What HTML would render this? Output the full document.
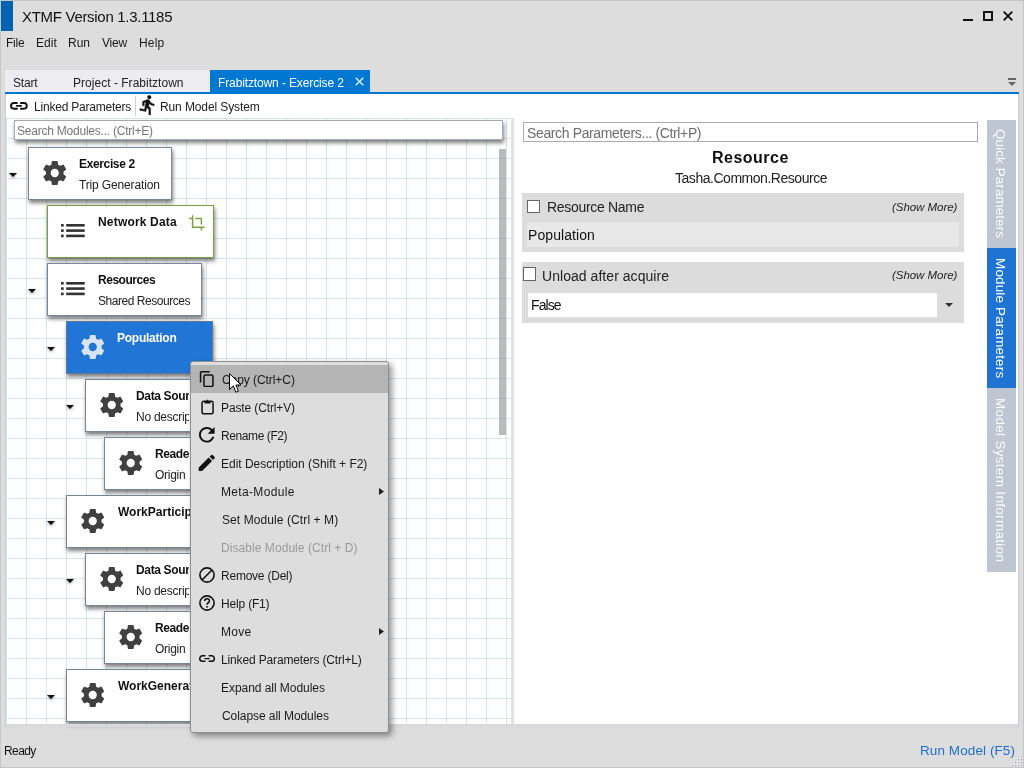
<!DOCTYPE html>
<html><head><meta charset="utf-8"><style>
html,body{margin:0;padding:0}
body{width:1024px;height:768px;overflow:hidden;position:relative;background:#dddddd;font-family:"Liberation Sans",sans-serif}
.t{position:absolute;white-space:pre;will-change:transform}
svg{display:block}
</style></head><body>
<div style="position:absolute;left:0px;top:0px;width:1024px;height:1px;background:#c6c6c6"></div>
<div style="position:absolute;left:0px;top:0px;width:1px;height:768px;background:#c6c6c6"></div>
<div style="position:absolute;left:1023px;top:0px;width:1px;height:768px;background:#c6c6c6"></div>
<div style="position:absolute;left:0px;top:767px;width:1024px;height:1px;background:#c6c6c6"></div>
<div style="position:absolute;left:1px;top:1px;width:12px;height:30px;background:#0063b1"></div>
<div class="t" style="left:21.62px;top:8px;font-size:15px;line-height:17px;color:#111;letter-spacing:-0.299px;">XTMF Version 1.3.1185</div>
<div style="position:absolute;left:963px;top:19px;width:10px;height:2px;background:#111"></div>
<div style="position:absolute;left:983px;top:11px;width:10px;height:10px;box-sizing:border-box;border:2px solid #111"></div>
<svg style="position:absolute;left:1003px;top:11px;" width="10" height="10" viewBox="0 0 10 10" preserveAspectRatio="none"><path d="M0.7 0.7L9.3 9.3M9.3 0.7L0.7 9.3" stroke="#111" stroke-width="1.9"/></svg>
<div class="t" style="left:6.44px;top:36px;font-size:12px;line-height:14px;color:#1a1a1a;letter-spacing:-0.207px;">File</div>
<div class="t" style="left:36.44px;top:36px;font-size:12px;line-height:14px;color:#1a1a1a;letter-spacing:0.027px;">Edit</div>
<div class="t" style="left:68.44px;top:36px;font-size:12px;line-height:14px;color:#1a1a1a;letter-spacing:-0.040px;">Run</div>
<div class="t" style="left:101.94px;top:36px;font-size:12px;line-height:14px;color:#1a1a1a;letter-spacing:-0.247px;">View</div>
<div class="t" style="left:138.74px;top:36px;font-size:12px;line-height:14px;color:#1a1a1a;letter-spacing:0.193px;">Help</div>
<div style="position:absolute;left:5px;top:70px;width:205px;height:22px;background:#ededf1"></div>
<div style="position:absolute;left:210px;top:70px;width:160px;height:22px;background:#0078d2"></div>
<div class="t" style="left:13.46px;top:76px;font-size:12px;line-height:14px;color:#222;letter-spacing:-0.180px;">Start</div>
<div class="t" style="left:73.04px;top:76px;font-size:12px;line-height:14px;color:#222;letter-spacing:0.025px;">Project - Frabitztown</div>
<div class="t" style="left:218.04px;top:76px;font-size:12px;line-height:14px;color:#fff;letter-spacing:-0.123px;">Frabitztown - Exercise 2</div>
<svg style="position:absolute;left:355px;top:77px;" width="9" height="9" viewBox="0 0 9 9" preserveAspectRatio="none"><path d="M0.7 0.7L8.3 8.3M8.3 0.7L0.7 8.3" stroke="#dde9f6" stroke-width="1.5"/></svg>
<div style="position:absolute;left:5px;top:92px;width:1014px;height:2px;background:#0078d2"></div>
<svg style="position:absolute;left:1008px;top:78px;" width="8" height="8" viewBox="0 0 8 8" preserveAspectRatio="none"><rect x="0" y="0" width="8" height="2" fill="#666"/><path d="M0 4H8L4 8Z" fill="#666"/></svg>
<div style="position:absolute;left:5px;top:94px;width:1px;height:634px;background:#cacadc"></div>
<div style="position:absolute;left:5px;top:727px;width:1014px;height:1px;background:#dadae2"></div>
<div style="position:absolute;left:6px;top:94px;width:1012px;height:24px;background:#fff"></div>
<div style="position:absolute;left:1018px;top:94px;width:1px;height:634px;background:#c8ccd8"></div>
<svg style="position:absolute;left:10px;top:102px;overflow:visible" width="18" height="8" viewBox="0 0 18 8" preserveAspectRatio="none"><path d="M6.95 0.95H3.9A2.9 2.9 0 0 0 3.9 6.75H6.95M10.85 0.95H13.9A2.9 2.9 0 0 1 13.9 6.75H10.85" stroke="#111" stroke-width="1.9" stroke-linecap="round" fill="none"/><path d="M6.6 3.9H11.2" stroke="#111" stroke-width="1.6" stroke-linecap="round"/></svg>
<div class="t" style="left:33.74px;top:100px;font-size:12px;line-height:14px;color:#222;letter-spacing:-0.210px;">Linked Parameters</div>
<div style="position:absolute;left:135px;top:96px;width:1px;height:20px;background:#d0d0d0"></div>
<svg style="position:absolute;left:137.1px;top:94.3px;" width="21.8" height="21.8" viewBox="0 0 24 24" preserveAspectRatio="none"><path stroke="#111" stroke-width="0.35" d="M13.5,5.5C14.59,5.5 15.5,4.58 15.5,3.5C15.5,2.38 14.59,1.5 13.5,1.5C12.39,1.5 11.5,2.38 11.5,3.5C11.5,4.58 12.39,5.5 13.5,5.5M9.89,19.38L10.89,15L13,17V23H15V15.5L12.89,13.5L13.5,10.5C14.79,12 16.79,13 19,13V11C17.09,11 15.5,10 14.69,8.58L13.69,7C13.29,6.38 12.69,6 12,6C11.69,6 11.5,6.08 11.19,6.08L6,8.28V13H8V9.58L9.79,8.88L8.19,17L3.29,16L2.89,18L9.89,19.38Z" fill="#111"/></svg>
<div class="t" style="left:160.04px;top:100px;font-size:12px;line-height:14px;color:#222;letter-spacing:-0.111px;">Run Model System</div>
<div style="position:absolute;left:6px;top:118px;width:505px;height:606px;background-color:#fff;background-image:linear-gradient(to right,#d5e6ee 1px,transparent 1px),linear-gradient(to bottom,#d5e6ee 1px,transparent 1px);background-size:20px 20px"></div>
<div style="position:absolute;left:511px;top:118px;width:3px;height:606px;background:#e2e2e2"></div>
<div style="position:absolute;left:514px;top:118px;width:504px;height:606px;background:#fff"></div>
<div style="position:absolute;left:14px;top:120px;width:489px;height:20px;box-sizing:border-box;background:#fff;border:1px solid #a4a8b0;box-shadow:0.5px 2.5px 4px rgba(0,0,0,0.5)"></div>
<div class="t" style="left:17.46px;top:124px;font-size:12px;line-height:14px;color:#777;letter-spacing:-0.224px;">Search Modules... (Ctrl+E)</div>
<svg style="position:absolute;left:9px;top:173px;overflow:visible;filter:drop-shadow(0 1.5px 1.5px rgba(0,0,0,0.4))" width="8" height="4" viewBox="0 0 8 4" preserveAspectRatio="none"><path d="M0 0H8L4 4Z" fill="#111"/></svg>
<div style="position:absolute;left:28px;top:147px;width:144px;height:53px;box-sizing:border-box;background:#fff;border:1px solid #74869a;box-shadow:0.5px 2.5px 4px rgba(0,0,0,0.5)"></div>
<svg style="position:absolute;left:42.5px;top:161px;width:23.5px" width="24" height="24" viewBox="2 2 20 20" preserveAspectRatio="none"><path d="M12,15.5A3.5,3.5 0 0,1 8.5,12A3.5,3.5 0 0,1 12,8.5A3.5,3.5 0 0,1 15.5,12A3.5,3.5 0 0,1 12,15.5M19.43,12.97C19.47,12.65 19.5,12.33 19.5,12C19.5,11.67 19.47,11.34 19.43,11L21.54,9.37C21.73,9.22 21.78,8.95 21.66,8.73L19.66,5.27C19.54,5.05 19.27,4.96 19.05,5.05L16.56,6.05C16.04,5.66 15.5,5.32 14.87,5.07L14.5,2.42C14.46,2.18 14.25,2 14,2H10C9.75,2 9.54,2.18 9.5,2.42L9.13,5.07C8.5,5.32 7.96,5.66 7.44,6.05L4.95,5.05C4.73,4.96 4.46,5.05 4.34,5.27L2.34,8.73C2.21,8.95 2.27,9.22 2.46,9.37L4.57,11C4.53,11.34 4.5,11.67 4.5,12C4.5,12.33 4.53,12.65 4.57,12.97L2.46,14.63C2.27,14.78 2.21,15.05 2.34,15.27L4.34,18.73C4.46,18.95 4.73,19.03 4.95,18.95L7.44,17.94C7.96,18.34 8.5,18.68 9.13,18.93L9.5,21.58C9.54,21.82 9.75,22 10,22H14C14.25,22 14.46,21.82 14.5,21.58L14.87,18.93C15.5,18.67 16.04,18.34 16.56,17.94L19.05,18.95C19.27,19.03 19.54,18.95 19.66,18.73L21.66,15.27C21.78,15.05 21.73,14.78 21.54,14.63L19.43,12.97Z" fill="#404040"/></svg>
<div class="t" style="left:78.72px;top:157px;font-size:12px;line-height:14px;color:#111;font-weight:700;letter-spacing:-0.360px;">Exercise 2</div>
<div class="t" style="left:79.26px;top:178px;font-size:12px;line-height:14px;color:#222;letter-spacing:-0.143px;">Trip Generation</div>
<div style="position:absolute;left:47px;top:205px;width:167px;height:53px;box-sizing:border-box;background:#fff;border:1px solid #76a03c;box-shadow:0.5px 2.5px 4px rgba(0,0,0,0.5)"></div>
<svg style="position:absolute;left:61px;top:224px;" width="24" height="14" viewBox="0 0 24 14" preserveAspectRatio="none"><rect x="0" y="0" width="2.7" height="2.6" fill="#333"/><rect x="5.2" y="0" width="18.5" height="2.6" fill="#333"/><rect x="0" y="5.3" width="2.7" height="2.6" fill="#333"/><rect x="5.2" y="5.3" width="18.5" height="2.6" fill="#333"/><rect x="0" y="10.6" width="2.7" height="2.6" fill="#333"/><rect x="5.2" y="10.6" width="18.5" height="2.6" fill="#333"/></svg>
<div class="t" style="left:97.72px;top:215px;font-size:12px;line-height:14px;color:#111;font-weight:700;letter-spacing:0.180px;">Network Data</div>
<svg style="position:absolute;left:189px;top:215px;" width="16" height="16" viewBox="0 0 16 16" preserveAspectRatio="none"><path d="M0 3.5H3.6M3.6 0.2V12.3H15.6M6.2 3.5H11.9Q12.4 3.5 12.4 4V9.6M12.4 12.3V15.6" stroke="#7aa23a" stroke-width="1.5" fill="none"/></svg>
<svg style="position:absolute;left:28px;top:289px;overflow:visible;filter:drop-shadow(0 1.5px 1.5px rgba(0,0,0,0.4))" width="8" height="4" viewBox="0 0 8 4" preserveAspectRatio="none"><path d="M0 0H8L4 4Z" fill="#111"/></svg>
<div style="position:absolute;left:47px;top:263px;width:155px;height:53px;box-sizing:border-box;background:#fff;border:1px solid #74869a;box-shadow:0.5px 2.5px 4px rgba(0,0,0,0.5)"></div>
<svg style="position:absolute;left:61px;top:282px;" width="24" height="14" viewBox="0 0 24 14" preserveAspectRatio="none"><rect x="0" y="0" width="2.7" height="2.6" fill="#333"/><rect x="5.2" y="0" width="18.5" height="2.6" fill="#333"/><rect x="0" y="5.3" width="2.7" height="2.6" fill="#333"/><rect x="5.2" y="5.3" width="18.5" height="2.6" fill="#333"/><rect x="0" y="10.6" width="2.7" height="2.6" fill="#333"/><rect x="5.2" y="10.6" width="18.5" height="2.6" fill="#333"/></svg>
<div class="t" style="left:97.72px;top:273px;font-size:12px;line-height:14px;color:#111;font-weight:700;letter-spacing:-0.465px;">Resources</div>
<div class="t" style="left:97.96px;top:294px;font-size:12px;line-height:14px;color:#222;letter-spacing:-0.464px;">Shared Resources</div>
<svg style="position:absolute;left:47px;top:347px;overflow:visible;filter:drop-shadow(0 1.5px 1.5px rgba(0,0,0,0.4))" width="8" height="4" viewBox="0 0 8 4" preserveAspectRatio="none"><path d="M0 0H8L4 4Z" fill="#111"/></svg>
<div style="position:absolute;left:66px;top:321px;width:147px;height:53px;box-sizing:border-box;background:#2175d5;border:1px solid #66788e;box-shadow:0.5px 2.5px 4px rgba(0,0,0,0.5)"></div>
<svg style="position:absolute;left:80.5px;top:335px;width:23.5px" width="24" height="24" viewBox="2 2 20 20" preserveAspectRatio="none"><path d="M12,15.5A3.5,3.5 0 0,1 8.5,12A3.5,3.5 0 0,1 12,8.5A3.5,3.5 0 0,1 15.5,12A3.5,3.5 0 0,1 12,15.5M19.43,12.97C19.47,12.65 19.5,12.33 19.5,12C19.5,11.67 19.47,11.34 19.43,11L21.54,9.37C21.73,9.22 21.78,8.95 21.66,8.73L19.66,5.27C19.54,5.05 19.27,4.96 19.05,5.05L16.56,6.05C16.04,5.66 15.5,5.32 14.87,5.07L14.5,2.42C14.46,2.18 14.25,2 14,2H10C9.75,2 9.54,2.18 9.5,2.42L9.13,5.07C8.5,5.32 7.96,5.66 7.44,6.05L4.95,5.05C4.73,4.96 4.46,5.05 4.34,5.27L2.34,8.73C2.21,8.95 2.27,9.22 2.46,9.37L4.57,11C4.53,11.34 4.5,11.67 4.5,12C4.5,12.33 4.53,12.65 4.57,12.97L2.46,14.63C2.27,14.78 2.21,15.05 2.34,15.27L4.34,18.73C4.46,18.95 4.73,19.03 4.95,18.95L7.44,17.94C7.96,18.34 8.5,18.68 9.13,18.93L9.5,21.58C9.54,21.82 9.75,22 10,22H14C14.25,22 14.46,21.82 14.5,21.58L14.87,18.93C15.5,18.67 16.04,18.34 16.56,17.94L19.05,18.95C19.27,19.03 19.54,18.95 19.66,18.73L21.66,15.27C21.78,15.05 21.73,14.78 21.54,14.63L19.43,12.97Z" fill="#d6e4f6"/></svg>
<div class="t" style="left:116.72px;top:331px;font-size:12px;line-height:14px;color:#fff;font-weight:700;letter-spacing:-0.253px;">Population</div>
<svg style="position:absolute;left:66px;top:405px;overflow:visible;filter:drop-shadow(0 1.5px 1.5px rgba(0,0,0,0.4))" width="8" height="4" viewBox="0 0 8 4" preserveAspectRatio="none"><path d="M0 0H8L4 4Z" fill="#111"/></svg>
<div style="position:absolute;left:85px;top:379px;width:150px;height:53px;box-sizing:border-box;background:#fff;border:1px solid #74869a;box-shadow:0.5px 2.5px 4px rgba(0,0,0,0.5)"></div>
<svg style="position:absolute;left:99.5px;top:393px;width:23.5px" width="24" height="24" viewBox="2 2 20 20" preserveAspectRatio="none"><path d="M12,15.5A3.5,3.5 0 0,1 8.5,12A3.5,3.5 0 0,1 12,8.5A3.5,3.5 0 0,1 15.5,12A3.5,3.5 0 0,1 12,15.5M19.43,12.97C19.47,12.65 19.5,12.33 19.5,12C19.5,11.67 19.47,11.34 19.43,11L21.54,9.37C21.73,9.22 21.78,8.95 21.66,8.73L19.66,5.27C19.54,5.05 19.27,4.96 19.05,5.05L16.56,6.05C16.04,5.66 15.5,5.32 14.87,5.07L14.5,2.42C14.46,2.18 14.25,2 14,2H10C9.75,2 9.54,2.18 9.5,2.42L9.13,5.07C8.5,5.32 7.96,5.66 7.44,6.05L4.95,5.05C4.73,4.96 4.46,5.05 4.34,5.27L2.34,8.73C2.21,8.95 2.27,9.22 2.46,9.37L4.57,11C4.53,11.34 4.5,11.67 4.5,12C4.5,12.33 4.53,12.65 4.57,12.97L2.46,14.63C2.27,14.78 2.21,15.05 2.34,15.27L4.34,18.73C4.46,18.95 4.73,19.03 4.95,18.95L7.44,17.94C7.96,18.34 8.5,18.68 9.13,18.93L9.5,21.58C9.54,21.82 9.75,22 10,22H14C14.25,22 14.46,21.82 14.5,21.58L14.87,18.93C15.5,18.67 16.04,18.34 16.56,17.94L19.05,18.95C19.27,19.03 19.54,18.95 19.66,18.73L21.66,15.27C21.78,15.05 21.73,14.78 21.54,14.63L19.43,12.97Z" fill="#404040"/></svg>
<div class="t" style="left:135.72px;top:389px;font-size:12px;line-height:14px;color:#111;font-weight:700;letter-spacing:-0.344px;width:53.28px;overflow:hidden;">Data Source</div>
<div class="t" style="left:135.54px;top:410px;font-size:12px;line-height:14px;color:#222;letter-spacing:-0.259px;width:53.46px;overflow:hidden;">No description</div>
<div style="position:absolute;left:104px;top:437px;width:150px;height:53px;box-sizing:border-box;background:#fff;border:1px solid #74869a;box-shadow:0.5px 2.5px 4px rgba(0,0,0,0.5)"></div>
<svg style="position:absolute;left:118.5px;top:451px;width:23.5px" width="24" height="24" viewBox="2 2 20 20" preserveAspectRatio="none"><path d="M12,15.5A3.5,3.5 0 0,1 8.5,12A3.5,3.5 0 0,1 12,8.5A3.5,3.5 0 0,1 15.5,12A3.5,3.5 0 0,1 12,15.5M19.43,12.97C19.47,12.65 19.5,12.33 19.5,12C19.5,11.67 19.47,11.34 19.43,11L21.54,9.37C21.73,9.22 21.78,8.95 21.66,8.73L19.66,5.27C19.54,5.05 19.27,4.96 19.05,5.05L16.56,6.05C16.04,5.66 15.5,5.32 14.87,5.07L14.5,2.42C14.46,2.18 14.25,2 14,2H10C9.75,2 9.54,2.18 9.5,2.42L9.13,5.07C8.5,5.32 7.96,5.66 7.44,6.05L4.95,5.05C4.73,4.96 4.46,5.05 4.34,5.27L2.34,8.73C2.21,8.95 2.27,9.22 2.46,9.37L4.57,11C4.53,11.34 4.5,11.67 4.5,12C4.5,12.33 4.53,12.65 4.57,12.97L2.46,14.63C2.27,14.78 2.21,15.05 2.34,15.27L4.34,18.73C4.46,18.95 4.73,19.03 4.95,18.95L7.44,17.94C7.96,18.34 8.5,18.68 9.13,18.93L9.5,21.58C9.54,21.82 9.75,22 10,22H14C14.25,22 14.46,21.82 14.5,21.58L14.87,18.93C15.5,18.67 16.04,18.34 16.56,17.94L19.05,18.95C19.27,19.03 19.54,18.95 19.66,18.73L21.66,15.27C21.78,15.05 21.73,14.78 21.54,14.63L19.43,12.97Z" fill="#404040"/></svg>
<div class="t" style="left:154.72px;top:447px;font-size:12px;line-height:14px;color:#111;font-weight:700;letter-spacing:-0.397px;width:34.28px;overflow:hidden;">Reader</div>
<div class="t" style="left:154.96px;top:468px;font-size:12px;line-height:14px;color:#222;letter-spacing:-0.276px;width:34.04px;overflow:hidden;">Origin</div>
<svg style="position:absolute;left:47px;top:521px;overflow:visible;filter:drop-shadow(0 1.5px 1.5px rgba(0,0,0,0.4))" width="8" height="4" viewBox="0 0 8 4" preserveAspectRatio="none"><path d="M0 0H8L4 4Z" fill="#111"/></svg>
<div style="position:absolute;left:66px;top:495px;width:170px;height:53px;box-sizing:border-box;background:#fff;border:1px solid #74869a;box-shadow:0.5px 2.5px 4px rgba(0,0,0,0.5)"></div>
<svg style="position:absolute;left:80.5px;top:509px;width:23.5px" width="24" height="24" viewBox="2 2 20 20" preserveAspectRatio="none"><path d="M12,15.5A3.5,3.5 0 0,1 8.5,12A3.5,3.5 0 0,1 12,8.5A3.5,3.5 0 0,1 15.5,12A3.5,3.5 0 0,1 12,15.5M19.43,12.97C19.47,12.65 19.5,12.33 19.5,12C19.5,11.67 19.47,11.34 19.43,11L21.54,9.37C21.73,9.22 21.78,8.95 21.66,8.73L19.66,5.27C19.54,5.05 19.27,4.96 19.05,5.05L16.56,6.05C16.04,5.66 15.5,5.32 14.87,5.07L14.5,2.42C14.46,2.18 14.25,2 14,2H10C9.75,2 9.54,2.18 9.5,2.42L9.13,5.07C8.5,5.32 7.96,5.66 7.44,6.05L4.95,5.05C4.73,4.96 4.46,5.05 4.34,5.27L2.34,8.73C2.21,8.95 2.27,9.22 2.46,9.37L4.57,11C4.53,11.34 4.5,11.67 4.5,12C4.5,12.33 4.53,12.65 4.57,12.97L2.46,14.63C2.27,14.78 2.21,15.05 2.34,15.27L4.34,18.73C4.46,18.95 4.73,19.03 4.95,18.95L7.44,17.94C7.96,18.34 8.5,18.68 9.13,18.93L9.5,21.58C9.54,21.82 9.75,22 10,22H14C14.25,22 14.46,21.82 14.5,21.58L14.87,18.93C15.5,18.67 16.04,18.34 16.56,17.94L19.05,18.95C19.27,19.03 19.54,18.95 19.66,18.73L21.66,15.27C21.78,15.05 21.73,14.78 21.54,14.63L19.43,12.97Z" fill="#404040"/></svg>
<div class="t" style="left:117.50px;top:505px;font-size:12px;line-height:14px;color:#111;font-weight:700;width:71.50px;overflow:hidden;">WorkParticipation</div>
<svg style="position:absolute;left:66px;top:579px;overflow:visible;filter:drop-shadow(0 1.5px 1.5px rgba(0,0,0,0.4))" width="8" height="4" viewBox="0 0 8 4" preserveAspectRatio="none"><path d="M0 0H8L4 4Z" fill="#111"/></svg>
<div style="position:absolute;left:85px;top:553px;width:150px;height:53px;box-sizing:border-box;background:#fff;border:1px solid #74869a;box-shadow:0.5px 2.5px 4px rgba(0,0,0,0.5)"></div>
<svg style="position:absolute;left:99.5px;top:567px;width:23.5px" width="24" height="24" viewBox="2 2 20 20" preserveAspectRatio="none"><path d="M12,15.5A3.5,3.5 0 0,1 8.5,12A3.5,3.5 0 0,1 12,8.5A3.5,3.5 0 0,1 15.5,12A3.5,3.5 0 0,1 12,15.5M19.43,12.97C19.47,12.65 19.5,12.33 19.5,12C19.5,11.67 19.47,11.34 19.43,11L21.54,9.37C21.73,9.22 21.78,8.95 21.66,8.73L19.66,5.27C19.54,5.05 19.27,4.96 19.05,5.05L16.56,6.05C16.04,5.66 15.5,5.32 14.87,5.07L14.5,2.42C14.46,2.18 14.25,2 14,2H10C9.75,2 9.54,2.18 9.5,2.42L9.13,5.07C8.5,5.32 7.96,5.66 7.44,6.05L4.95,5.05C4.73,4.96 4.46,5.05 4.34,5.27L2.34,8.73C2.21,8.95 2.27,9.22 2.46,9.37L4.57,11C4.53,11.34 4.5,11.67 4.5,12C4.5,12.33 4.53,12.65 4.57,12.97L2.46,14.63C2.27,14.78 2.21,15.05 2.34,15.27L4.34,18.73C4.46,18.95 4.73,19.03 4.95,18.95L7.44,17.94C7.96,18.34 8.5,18.68 9.13,18.93L9.5,21.58C9.54,21.82 9.75,22 10,22H14C14.25,22 14.46,21.82 14.5,21.58L14.87,18.93C15.5,18.67 16.04,18.34 16.56,17.94L19.05,18.95C19.27,19.03 19.54,18.95 19.66,18.73L21.66,15.27C21.78,15.05 21.73,14.78 21.54,14.63L19.43,12.97Z" fill="#404040"/></svg>
<div class="t" style="left:135.72px;top:563px;font-size:12px;line-height:14px;color:#111;font-weight:700;letter-spacing:-0.344px;width:53.28px;overflow:hidden;">Data Source</div>
<div class="t" style="left:135.54px;top:584px;font-size:12px;line-height:14px;color:#222;letter-spacing:-0.259px;width:53.46px;overflow:hidden;">No description</div>
<div style="position:absolute;left:104px;top:611px;width:150px;height:53px;box-sizing:border-box;background:#fff;border:1px solid #74869a;box-shadow:0.5px 2.5px 4px rgba(0,0,0,0.5)"></div>
<svg style="position:absolute;left:118.5px;top:625px;width:23.5px" width="24" height="24" viewBox="2 2 20 20" preserveAspectRatio="none"><path d="M12,15.5A3.5,3.5 0 0,1 8.5,12A3.5,3.5 0 0,1 12,8.5A3.5,3.5 0 0,1 15.5,12A3.5,3.5 0 0,1 12,15.5M19.43,12.97C19.47,12.65 19.5,12.33 19.5,12C19.5,11.67 19.47,11.34 19.43,11L21.54,9.37C21.73,9.22 21.78,8.95 21.66,8.73L19.66,5.27C19.54,5.05 19.27,4.96 19.05,5.05L16.56,6.05C16.04,5.66 15.5,5.32 14.87,5.07L14.5,2.42C14.46,2.18 14.25,2 14,2H10C9.75,2 9.54,2.18 9.5,2.42L9.13,5.07C8.5,5.32 7.96,5.66 7.44,6.05L4.95,5.05C4.73,4.96 4.46,5.05 4.34,5.27L2.34,8.73C2.21,8.95 2.27,9.22 2.46,9.37L4.57,11C4.53,11.34 4.5,11.67 4.5,12C4.5,12.33 4.53,12.65 4.57,12.97L2.46,14.63C2.27,14.78 2.21,15.05 2.34,15.27L4.34,18.73C4.46,18.95 4.73,19.03 4.95,18.95L7.44,17.94C7.96,18.34 8.5,18.68 9.13,18.93L9.5,21.58C9.54,21.82 9.75,22 10,22H14C14.25,22 14.46,21.82 14.5,21.58L14.87,18.93C15.5,18.67 16.04,18.34 16.56,17.94L19.05,18.95C19.27,19.03 19.54,18.95 19.66,18.73L21.66,15.27C21.78,15.05 21.73,14.78 21.54,14.63L19.43,12.97Z" fill="#404040"/></svg>
<div class="t" style="left:154.72px;top:621px;font-size:12px;line-height:14px;color:#111;font-weight:700;letter-spacing:-0.397px;width:34.28px;overflow:hidden;">Reader</div>
<div class="t" style="left:154.96px;top:642px;font-size:12px;line-height:14px;color:#222;letter-spacing:-0.276px;width:34.04px;overflow:hidden;">Origin</div>
<svg style="position:absolute;left:47px;top:695px;overflow:visible;filter:drop-shadow(0 1.5px 1.5px rgba(0,0,0,0.4))" width="8" height="4" viewBox="0 0 8 4" preserveAspectRatio="none"><path d="M0 0H8L4 4Z" fill="#111"/></svg>
<div style="position:absolute;left:66px;top:669px;width:170px;height:53px;box-sizing:border-box;background:#fff;border:1px solid #74869a;box-shadow:0.5px 2.5px 4px rgba(0,0,0,0.5)"></div>
<svg style="position:absolute;left:80.5px;top:683px;width:23.5px" width="24" height="24" viewBox="2 2 20 20" preserveAspectRatio="none"><path d="M12,15.5A3.5,3.5 0 0,1 8.5,12A3.5,3.5 0 0,1 12,8.5A3.5,3.5 0 0,1 15.5,12A3.5,3.5 0 0,1 12,15.5M19.43,12.97C19.47,12.65 19.5,12.33 19.5,12C19.5,11.67 19.47,11.34 19.43,11L21.54,9.37C21.73,9.22 21.78,8.95 21.66,8.73L19.66,5.27C19.54,5.05 19.27,4.96 19.05,5.05L16.56,6.05C16.04,5.66 15.5,5.32 14.87,5.07L14.5,2.42C14.46,2.18 14.25,2 14,2H10C9.75,2 9.54,2.18 9.5,2.42L9.13,5.07C8.5,5.32 7.96,5.66 7.44,6.05L4.95,5.05C4.73,4.96 4.46,5.05 4.34,5.27L2.34,8.73C2.21,8.95 2.27,9.22 2.46,9.37L4.57,11C4.53,11.34 4.5,11.67 4.5,12C4.5,12.33 4.53,12.65 4.57,12.97L2.46,14.63C2.27,14.78 2.21,15.05 2.34,15.27L4.34,18.73C4.46,18.95 4.73,19.03 4.95,18.95L7.44,17.94C7.96,18.34 8.5,18.68 9.13,18.93L9.5,21.58C9.54,21.82 9.75,22 10,22H14C14.25,22 14.46,21.82 14.5,21.58L14.87,18.93C15.5,18.67 16.04,18.34 16.56,17.94L19.05,18.95C19.27,19.03 19.54,18.95 19.66,18.73L21.66,15.27C21.78,15.05 21.73,14.78 21.54,14.63L19.43,12.97Z" fill="#404040"/></svg>
<div class="t" style="left:117.50px;top:679px;font-size:12px;line-height:14px;color:#111;font-weight:700;width:71.50px;overflow:hidden;">WorkGeneration</div>
<div style="position:absolute;left:6px;top:724px;width:1012px;height:3px;background:linear-gradient(#d8d8d8,#dbdbdb)"></div>
<div style="position:absolute;left:499px;top:149px;width:7px;height:286px;background:rgba(150,150,150,0.65)"></div>
<div style="position:absolute;left:523px;top:122px;width:455px;height:20px;box-sizing:border-box;border:1px solid #a8acb4;background:#fff"></div>
<div class="t" style="left:526.97px;top:125px;font-size:14px;line-height:16px;color:#6d6d6d;letter-spacing:-0.366px;">Search Parameters... (Ctrl+P)</div>
<div class="t" style="left:712.26px;top:149px;font-size:16px;line-height:17px;color:#111;font-weight:700;letter-spacing:0.489px;">Resource</div>
<div class="t" style="left:674.72px;top:170px;font-size:14px;line-height:16px;color:#222;letter-spacing:-0.467px;">Tasha.Common.Resource</div>
<div style="position:absolute;left:522px;top:193px;width:442px;height:59px;background:#dcdcdc"></div>
<div style="position:absolute;left:527px;top:200px;width:13px;height:13px;box-sizing:border-box;border:1px solid #666;background:#fff"></div>
<div class="t" style="left:546.88px;top:199px;font-size:14px;line-height:16px;color:#222;letter-spacing:-0.308px;">Resource Name</div>
<div class="t" style="left:891.78px;top:201px;font-size:11.5px;line-height:12px;color:#222;font-style:italic;letter-spacing:-0.043px;">(Show More)</div>
<div style="position:absolute;left:527px;top:222px;width:432px;height:25px;background:#e8e8e8"></div>
<div class="t" style="left:528.18px;top:227px;font-size:14px;line-height:16px;color:#111;letter-spacing:0.076px;">Population</div>
<div style="position:absolute;left:522px;top:262px;width:442px;height:61px;background:#dcdcdc"></div>
<div style="position:absolute;left:523px;top:267px;width:13px;height:14px;box-sizing:border-box;border:1px solid #666;background:#fff"></div>
<div class="t" style="left:542.25px;top:268px;font-size:14px;line-height:16px;color:#222;letter-spacing:0.048px;">Unload after acquire</div>
<div class="t" style="left:891.78px;top:269px;font-size:11.5px;line-height:12px;color:#222;font-style:italic;letter-spacing:-0.043px;">(Show More)</div>
<div style="position:absolute;left:528px;top:293px;width:409px;height:24px;background:#fff"></div>
<div class="t" style="left:531.28px;top:297px;font-size:14px;line-height:16px;color:#111;letter-spacing:-0.895px;">False</div>
<svg style="position:absolute;left:945px;top:303px;" width="8" height="4" viewBox="0 0 8 4" preserveAspectRatio="none"><path d="M0 0H8L4 4Z" fill="#333"/></svg>
<div style="position:absolute;left:987px;top:120px;width:29px;height:128px;background:#bec6d2"></div>
<div style="position:absolute;left:987px;top:248px;width:29px;height:140px;background:#1f73d3"></div>
<div style="position:absolute;left:987px;top:388px;width:29px;height:184px;background:#bec6d2"></div>
<div class="t" style="left:1008px;top:129.39px;transform-origin:0 0;transform:rotate(90deg);font-size:13.5px;line-height:15px;color:#fbfcfd;letter-spacing:0.068px">Quick Parameters</div>
<div class="t" style="left:1008px;top:257.92px;transform-origin:0 0;transform:rotate(90deg);font-size:13.5px;line-height:15px;color:#fff;letter-spacing:0.148px">Module Parameters</div>
<div class="t" style="left:1008px;top:397.92px;transform-origin:0 0;transform:rotate(90deg);font-size:13.5px;line-height:15px;color:#fbfcfd;letter-spacing:0.311px">Model System Information</div>
<div style="position:absolute;left:190px;top:361px;width:199px;height:372px;box-sizing:border-box;background:#dddddd;border:1px solid #8e8e8e;border-radius:3px;box-shadow:3px 3px 6px rgba(0,0,0,0.42)"></div>
<div style="position:absolute;left:191px;top:365px;width:197px;height:28px;background:#b4b4b4"></div>
<div class="t" style="left:221.60px;top:373px;font-size:12px;line-height:14px;color:#1a1a1a;letter-spacing:-0.067px;">Copy (Ctrl+C)</div>
<svg style="position:absolute;left:199px;top:371px;" width="16" height="16" viewBox="0 0 16 16" preserveAspectRatio="none"><path d="M1.55 11.5V1.6Q1.55 0.8 2.35 0.8H10.8" stroke="#111" stroke-width="1.5" fill="none"/><rect x="4.95" y="4.0" width="9.0" height="11.6" rx="1.6" stroke="#111" stroke-width="1.5" fill="none"/></svg>
<div class="t" style="left:221.24px;top:401px;font-size:12px;line-height:14px;color:#1a1a1a;letter-spacing:-0.122px;">Paste (Ctrl+V)</div>
<svg style="position:absolute;left:199px;top:399px;overflow:visible" width="16" height="16" viewBox="0 0 16 16" preserveAspectRatio="none"><rect x="3.05" y="2.25" width="11.0" height="12.6" rx="1.5" stroke="#111" stroke-width="1.5" fill="none"/><path d="M5.4 3.0H11.7V4.6H5.4Z M7.0 3.0L8.55 0.3L10.1 3.0Z" fill="#111"/></svg>
<div class="t" style="left:221.24px;top:429px;font-size:12px;line-height:14px;color:#1a1a1a;letter-spacing:-0.410px;">Rename (F2)</div>
<svg style="position:absolute;left:195.2px;top:422.9px;" width="23.5" height="23.5" viewBox="0 0 24 24" preserveAspectRatio="none"><path d="M17.65,6.35C16.2,4.9 14.21,4 12,4A8,8 0 0,0 4,12A8,8 0 0,0 12,20C15.73,20 18.84,17.45 19.73,14H17.65C16.83,16.33 14.61,18 12,18A6,6 0 0,1 6,12A6,6 0 0,1 12,6C13.66,6 15.14,6.69 16.22,7.78L13,11H20V4L17.65,6.35Z" fill="#111"/></svg>
<div class="t" style="left:221.24px;top:457px;font-size:12px;line-height:14px;color:#1a1a1a;letter-spacing:-0.026px;">Edit Description (Shift + F2)</div>
<svg style="position:absolute;left:196.1px;top:452.2px;" width="21.6" height="21.6" viewBox="0 0 24 24" preserveAspectRatio="none"><path d="M20.71,7.04C21.1,6.65 21.1,6 20.71,5.63L18.37,3.29C18,2.9 17.35,2.9 16.96,3.29L15.12,5.12L18.87,8.87M3,17.25V21H6.75L17.81,9.93L14.06,6.18L3,17.25Z" fill="#111"/></svg>
<div class="t" style="left:220.64px;top:485px;font-size:12px;line-height:14px;color:#1a1a1a;letter-spacing:0.338px;">Meta-Module</div>
<svg style="position:absolute;left:379px;top:488.0px;" width="5" height="7" viewBox="0 0 5 7" preserveAspectRatio="none"><path d="M0 0L5 3.5L0 7Z" fill="#222"/></svg>
<div class="t" style="left:221.66px;top:513px;font-size:12px;line-height:14px;color:#1a1a1a;letter-spacing:0.090px;">Set Module (Ctrl + M)</div>
<div class="t" style="left:221.24px;top:541px;font-size:12px;line-height:14px;color:#9a9a9a;letter-spacing:0.062px;">Disable Module (Ctrl + D)</div>
<div class="t" style="left:221.24px;top:569px;font-size:12px;line-height:14px;color:#1a1a1a;letter-spacing:-0.227px;">Remove (Del)</div>
<svg style="position:absolute;left:199px;top:567px;" width="16" height="16" viewBox="0 0 16 16" preserveAspectRatio="none"><circle cx="8" cy="8" r="7.1" stroke="#111" stroke-width="1.6" fill="none"/><path d="M3 13L13 3" stroke="#111" stroke-width="1.6"/></svg>
<div class="t" style="left:221.24px;top:597px;font-size:12px;line-height:14px;color:#1a1a1a;letter-spacing:-0.175px;">Help (F1)</div>
<svg style="position:absolute;left:199px;top:595px;" width="16" height="16" viewBox="0 0 16 16" preserveAspectRatio="none"><circle cx="8" cy="8" r="7.1" stroke="#111" stroke-width="1.6" fill="none"/><path d="M5.6 6.1Q5.6 3.7 8 3.7Q10.4 3.7 10.4 5.9Q10.4 7.2 9 8Q8 8.6 8 9.8" stroke="#111" stroke-width="1.5" fill="none"/><rect x="7.2" y="11" width="1.6" height="1.6" fill="#111"/></svg>
<div class="t" style="left:220.64px;top:625px;font-size:12px;line-height:14px;color:#1a1a1a;letter-spacing:0.253px;">Move</div>
<svg style="position:absolute;left:379px;top:628.0px;" width="5" height="7" viewBox="0 0 5 7" preserveAspectRatio="none"><path d="M0 0L5 3.5L0 7Z" fill="#222"/></svg>
<div class="t" style="left:221.24px;top:653px;font-size:12px;line-height:14px;color:#1a1a1a;letter-spacing:-0.143px;">Linked Parameters (Ctrl+L)</div>
<svg style="position:absolute;left:199px;top:655px;overflow:visible" width="16" height="7" viewBox="0 0 16 7" preserveAspectRatio="none"><path d="M5.95 0.75H3.55A2.8 2.8 0 0 0 3.55 6.35H5.95M10.15 0.75H12.55A2.8 2.8 0 0 1 12.55 6.35H10.15" stroke="#111" stroke-width="1.5" stroke-linecap="round" fill="none"/><path d="M5.85 3.6H10.25" stroke="#111" stroke-width="1.1" stroke-linecap="round"/></svg>
<div class="t" style="left:221.24px;top:681px;font-size:12px;line-height:14px;color:#1a1a1a;letter-spacing:-0.046px;">Expand all Modules</div>
<div class="t" style="left:221.60px;top:709px;font-size:12px;line-height:14px;color:#1a1a1a;letter-spacing:-0.063px;">Colapse all Modules</div>
<svg style="position:absolute;left:229px;top:373px;" width="13" height="21" viewBox="0 0 13 21" preserveAspectRatio="none"><path d="M0.5 0.5V16.5L4.3 12.9L6.9 19.2L9.4 18.2L6.9 12H12Z" fill="#fff" stroke="#000" stroke-width="1"/></svg>
<div class="t" style="left:3.74px;top:743.7px;font-size:12px;line-height:14px;color:#111;letter-spacing:-0.605px;">Ready</div>
<div class="t" style="left:919.92px;top:743px;font-size:13.5px;line-height:15px;color:#1e6fcc;letter-spacing:0.087px;">Run Model (F5)</div>
<div style="position:absolute;left:1020px;top:755px;width:1px;height:1px;background:#fbfbfb"></div>
<div style="position:absolute;left:1021px;top:756px;width:1px;height:1px;background:#98a0b0"></div>
<div style="position:absolute;left:1020px;top:758px;width:1px;height:1px;background:#fbfbfb"></div>
<div style="position:absolute;left:1021px;top:759px;width:1px;height:1px;background:#98a0b0"></div>
<div style="position:absolute;left:1017px;top:758px;width:1px;height:1px;background:#fbfbfb"></div>
<div style="position:absolute;left:1018px;top:759px;width:1px;height:1px;background:#98a0b0"></div>
<div style="position:absolute;left:1020px;top:761px;width:1px;height:1px;background:#fbfbfb"></div>
<div style="position:absolute;left:1021px;top:762px;width:1px;height:1px;background:#98a0b0"></div>
<div style="position:absolute;left:1017px;top:761px;width:1px;height:1px;background:#fbfbfb"></div>
<div style="position:absolute;left:1018px;top:762px;width:1px;height:1px;background:#98a0b0"></div>
<div style="position:absolute;left:1014px;top:761px;width:1px;height:1px;background:#fbfbfb"></div>
<div style="position:absolute;left:1015px;top:762px;width:1px;height:1px;background:#98a0b0"></div>
<div style="position:absolute;left:1020px;top:764px;width:1px;height:1px;background:#fbfbfb"></div>
<div style="position:absolute;left:1021px;top:765px;width:1px;height:1px;background:#98a0b0"></div>
<div style="position:absolute;left:1017px;top:764px;width:1px;height:1px;background:#fbfbfb"></div>
<div style="position:absolute;left:1018px;top:765px;width:1px;height:1px;background:#98a0b0"></div>
<div style="position:absolute;left:1014px;top:764px;width:1px;height:1px;background:#fbfbfb"></div>
<div style="position:absolute;left:1015px;top:765px;width:1px;height:1px;background:#98a0b0"></div>
<div style="position:absolute;left:1011px;top:764px;width:1px;height:1px;background:#fbfbfb"></div>
<div style="position:absolute;left:1012px;top:765px;width:1px;height:1px;background:#98a0b0"></div>
</body></html>
